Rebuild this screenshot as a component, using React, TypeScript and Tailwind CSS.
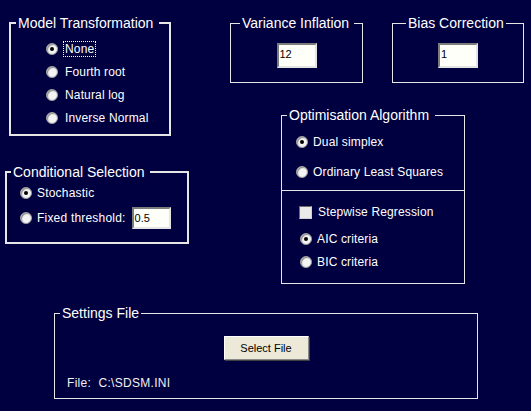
import React from "react";

const font = { fontFamily: '"Liberation Sans", Arial, sans-serif' };

function Radio({ checked }: { checked?: boolean }) {
  return (
    <span className="w-[12px] h-[12px] shrink-0 rounded-full bg-[#f4f4f4] border border-[#9a9a9a] shadow-[inset_1px_1px_1px_#8a8a8a] flex items-center justify-center">
      {checked && <span className="w-[4px] h-[4px] rounded-full bg-black" />}
    </span>
  );
}

function Field({ value, className = "" }: { value: string; className?: string }) {
  return (
    <div
      className={`bg-[#fffffa] border-2 border-t-[#7c7c7c] border-l-[#7c7c7c] border-b-[#e4e4e4] border-r-[#e4e4e4] text-black text-[11px] leading-[14px] pl-[1px] pt-[2px] ${className}`}
    >
      {value}
    </div>
  );
}

function Group({
  title,
  className,
  legendClass,
  children,
}: {
  title: string;
  className: string;
  legendClass: string;
  children?: React.ReactNode;
}) {
  return (
    <fieldset className={`border-[#e6e6e6] shrink-0 ${className}`}>
      <legend className={`text-[14px] leading-[16px] text-white ${legendClass}`}>{title}</legend>
      {children}
    </fieldset>
  );
}

export default function App() {
  return (
    <div className="w-[531px] h-[411px] bg-[#000040] text-white flex flex-col overflow-hidden" style={font}>
      <div className="flex">
        {/* left column */}
        <div className="w-[230px] flex flex-col">
          <Group
            title="Model Transformation"
            className="ml-[9px] mt-[15px] w-[162px] h-[121px] border-2"
            legendClass="ml-[5px] pl-[2px] pr-[6px]"
          >
            <div className="pt-[6px] pl-[35px] text-[12px] tracking-[0.15px]">
              {[
                ["None", true],
                ["Fourth root", false],
                ["Natural log", false],
                ["Inverse Normal", false],
              ].map(([label, on]) => (
                <div key={label as string} className="h-[23px] flex items-center gap-[5px]">
                  <Radio checked={on as boolean} />
                  <span
                    className={
                      on ? "border border-dotted border-white px-[1px] leading-[14px]" : "pl-[2px]"
                    }
                  >
                    {label}
                  </span>
                </div>
              ))}
            </div>
          </Group>

          <Group
            title="Conditional Selection"
            className="ml-[5px] mt-[28px] w-[184px] h-[80px] border-2"
            legendClass="ml-[4px] pl-[2px] pr-[5px]"
          >
            <div className="pl-[13px] text-[12px] tracking-[0.2px]">
              <div className="h-[25px] flex items-center gap-[5px]">
                <Radio checked />
                <span>Stochastic</span>
              </div>
              <div className="h-[25px] flex items-center gap-[5px]">
                <Radio />
                <span>Fixed threshold:</span>
                <Field value="0.5" className="ml-[1px] w-[39px] h-[22px] tracking-normal" />
              </div>
            </div>
          </Group>
        </div>

        {/* right column */}
        <div className="flex flex-col">
          <div className="flex gap-[29px] mt-[15px]">
            <Group
              title="Variance Inflation"
              className="w-[133px] h-[68px] border"
              legendClass="ml-[9px] pl-[2px] pr-[5px]"
            >
              <div className="flex justify-center pt-[12px]">
                <Field value="12" className="w-[40px] h-[25px]" />
              </div>
            </Group>
            <Group
              title="Bias Correction"
              className="w-[132px] h-[68px] border"
              legendClass="ml-[13px] px-[2px]"
            >
              <div className="flex justify-center pt-[12px]">
                <Field value="1" className="w-[40px] h-[25px]" />
              </div>
            </Group>
          </div>

          <Group
            title="Optimisation Algorithm"
            className="ml-[51px] mt-[24px] w-[184px] h-[177px] border"
            legendClass="ml-[5px] pl-[2px] pr-[6px]"
          >
            <div className="pl-[14px] pt-[4px] pb-[3px] text-[12px] tracking-[0.15px]">
              <div className="h-[30px] flex items-center gap-[5px]">
                <Radio checked />
                <span>Dual simplex</span>
              </div>
              <div className="h-[30px] flex items-center gap-[5px]">
                <Radio />
                <span>Ordinary Least Squares</span>
              </div>
            </div>
            <div className="border-t border-[#e6e6e6]" />
            <div className="pt-[10px] text-[12px] tracking-[0.15px]">
              <div className="h-[22px] pl-[17px] flex items-center gap-[6px]">
                <span className="w-[13px] h-[13px] shrink-0 bg-[#e9e9e9] border border-t-[#6a6a6a] border-l-[#6a6a6a] border-b-[#cfcfcf] border-r-[#cfcfcf]" />
                <span>Stepwise Regression</span>
              </div>
              <div className="mt-[4px] pl-[18px]">
                <div className="h-[24px] flex items-center gap-[5px]">
                  <Radio checked />
                  <span>AIC criteria</span>
                </div>
                <div className="h-[22px] flex items-center gap-[5px]">
                  <Radio />
                  <span>BIC criteria</span>
                </div>
              </div>
            </div>
          </Group>
        </div>
      </div>

      <Group
        title="Settings File"
        className="ml-[54px] mt-[21px] w-[424px] h-[94px] border"
        legendClass="ml-[5px] px-[2px]"
      >
        <div className="flex justify-center pt-[15px]">
          <button className="w-[85px] h-[24px] bg-[#ece9d8] text-black text-[11px] border border-t-white border-l-white border-b-[#8a8a8a] border-r-[#8a8a8a] shadow-[1px_1px_0_#404040]">
            Select File
          </button>
        </div>
        <div className="pl-[12px] pt-[14px] text-[12px] tracking-[0.3px] text-[#f0f0f0] whitespace-pre">
          File:  C:\SDSM.INI
        </div>
      </Group>
    </div>
  );
}
